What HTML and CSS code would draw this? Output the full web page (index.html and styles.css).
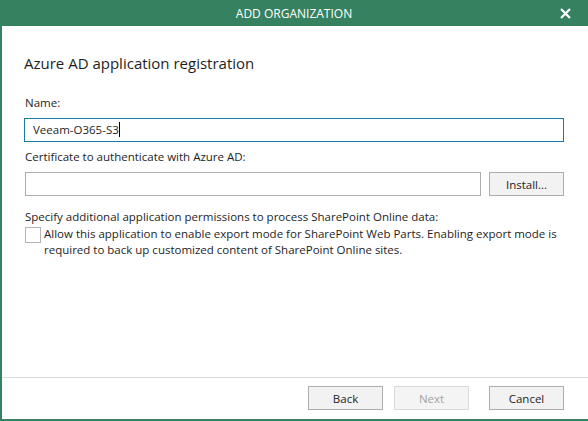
FILE: index.html
```html
<!DOCTYPE html>
<html lang="en">
<head>
  <meta charset="UTF-8">
  <title>Add Organization</title>
  <link rel="stylesheet" href="styles.css">
</head>
<body>
  <div class="dialog">
    <div class="titlebar">
      <span class="title">ADD ORGANIZATION</span>
      <span class="close">
        <svg width="11" height="11" viewBox="0 0 11 11"><path d="M1 1 L10 10 M10 1 L1 10" stroke="#fff" stroke-width="2.2"/></svg>
      </span>
    </div>

    <div class="content">
      <h2 class="heading">Azure AD application registration</h2>

      <div class="label name-label">Name:</div>
      <div class="input focused">Veeam-O365-S3<span class="caret"></span></div>

      <div class="label cert-label">Certificate to authenticate with Azure AD:</div>
      <div class="row">
        <div class="input"></div>
        <button class="btn">Install...</button>
      </div>

      <div class="label perm-label">Specify additional application permissions to process SharePoint Online data:</div>
      <div class="check-row">
        <span class="checkbox"></span>
        <span class="check-text">Allow this application to enable export mode for SharePoint Web Parts. Enabling export mode is required to back up customized content of SharePoint Online sites.</span>
      </div>
    </div>

    <div class="footer">
      <button class="btn">Back</button>
      <button class="btn disabled">Next</button>
      <button class="btn cancel">Cancel</button>
    </div>
  </div>
</body>
</html>
```

FILE: styles.css
```css
html, body {
  margin: 0;
  padding: 0;
  background: #fff;
}
body {
  font-family: "Open Sans", "Noto Sans", sans-serif;
  font-size: 11.5px;
  color: #1e1e1e;
}
.dialog {
  height: 421px;
  box-sizing: border-box;
  border-left: 2px solid #358160;
  border-bottom: 2px solid #358160;
  display: flex;
  flex-direction: column;
}
.titlebar {
  height: 26px;
  background: #358160;
  color: #fff;
  display: flex;
  align-items: center;
  justify-content: center;
  position: relative;
  margin-left: -2px;
}
.title {
  font-size: 12px;
}
.close {
  position: absolute;
  right: 17px;
  top: 8px;
  line-height: 0;
}
.content {
  flex: 1;
  padding: 0 24px 0 22px;
}
.heading {
  font-size: 15px;
  font-weight: normal;
  margin: 26px 0 0 0;
  height: 22px;
  line-height: 22px;
}
.label {
  height: 17px;
  line-height: 17px;
  padding-left: 1px;
}
.name-label {
  margin-top: 20px;
}
.cert-label {
  margin-top: 6px;
}
.perm-label {
  margin-top: 12px;
}
.input {
  height: 24px;
  box-sizing: border-box;
  border: 1px solid #adadad;
  line-height: 22px;
  padding-left: 8px;
  margin-top: 7px;
  flex: 1;
}
.input.focused {
  border-color: #1979a9;
}
.caret {
  display: inline-block;
  width: 1px;
  height: 15px;
  background: #000;
  vertical-align: -3px;
}
.row {
  display: flex;
  gap: 8px;
  margin-top: 7px;
}
.row .input {
  margin-top: 0;
  margin-left: 1px;
}
.btn {
  width: 75px;
  height: 24px;
  box-sizing: border-box;
  border: 1px solid #adadad;
  background: #f2f2f2;
  font-family: inherit;
  font-size: 11.5px;
  color: #1e1e1e;
  padding: 0;
}
.btn.disabled {
  color: #a3a3a3;
  border-color: #dadada;
  background: #f4f4f4;
}
.check-row {
  display: flex;
  margin-top: 2px;
  padding-left: 1px;
}
.checkbox {
  width: 14px;
  height: 14px;
  flex: none;
  border: 1px solid #b4b4b4;
  margin-right: 3px;
}
.check-text {
  line-height: 16px;
  margin-top: -1px;
}
.footer {
  height: 42px;
  border-top: 1px solid #dadada;
  display: flex;
  align-items: flex-start;
  justify-content: flex-end;
  padding: 8px 24px 0 0;
  box-sizing: border-box;
  gap: 11px;
}
.footer .cancel {
  margin-left: 9px;
}
```
